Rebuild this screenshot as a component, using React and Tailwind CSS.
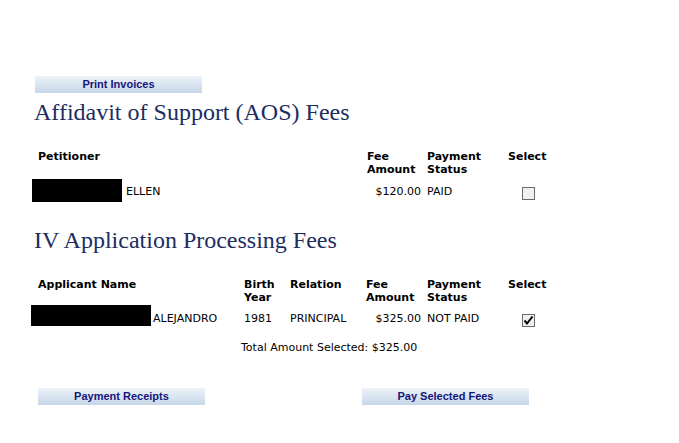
import React from "react";

const verdana = { fontFamily: '"DejaVu Sans", Verdana, sans-serif' };

function Btn({ children, className = "" }) {
  return (
    <div
      className={`h-[17px] w-[167px] flex items-center justify-center bg-gradient-to-b from-[#eef3f9] to-[#c6d7e9] text-[11px] font-bold text-[#16167a] leading-none ${className}`}
      style={{ fontFamily: '"Liberation Sans", Arial, sans-serif' }}
    >
      {children}
    </div>
  );
}

function Check({ checked }) {
  return (
    <div className="w-[13px] h-[13px] border border-[#6b6b6b] bg-[#f0f0f0] flex items-center justify-center">
      {checked && (
        <svg width="11" height="11" viewBox="0 0 11 11">
          <path d="M1.5 5.5 L4 8.5 L9.5 1.5" stroke="#000" strokeWidth="2" fill="none" />
        </svg>
      )}
    </div>
  );
}

export default function App() {
  return (
    <div className="w-[679px] h-[443px] bg-white pt-[76px] pl-[32px] text-black" style={verdana}>
      <Btn className="ml-[3px]">Print Invoices</Btn>

      <h1
        className="ml-[2px] mt-[6px] text-[24px] leading-[27px] text-[#1c2d5e]"
        style={{ fontFamily: '"Liberation Serif", "Times New Roman", serif' }}
      >
        Affidavit of Support (AOS) Fees
      </h1>

      <div className="mt-[24px] text-[11px] leading-[13px]">
        <div className="grid grid-cols-[329px_62px_79px_60px] font-bold">
          <div className="pl-[6px]">Petitioner</div>
          <div className="pl-[6px]">Fee<br />Amount</div>
          <div className="pl-[4px]">Payment<br />Status</div>
          <div className="pl-[6px]">Select</div>
        </div>
        <div className="grid grid-cols-[329px_62px_79px_60px] mt-[3px]">
          <div className="flex items-start">
            <div className="w-[90px] h-[23px] bg-black" />
            <span className="ml-[4px] pt-[6px]">ELLEN</span>
          </div>
          <div className="pt-[6px] text-right pr-[2px]">$120.00</div>
          <div className="pt-[6px] pl-[4px]">PAID</div>
          <div className="pt-[8px] pl-[20px]">
            <Check />
          </div>
        </div>
      </div>

      <h1
        className="ml-[2px] mt-[25px] text-[24px] leading-[27px] text-[#1c2d5e]"
        style={{ fontFamily: '"Liberation Serif", "Times New Roman", serif' }}
      >
        IV Application Processing Fees
      </h1>

      <div className="mt-[24px] text-[11px] leading-[13px]">
        <div className="grid grid-cols-[206px_46px_76px_63px_79px_60px] font-bold">
          <div className="pl-[6px]">Applicant Name</div>
          <div className="pl-[6px]">Birth<br />Year</div>
          <div className="pl-[6px]">Relation</div>
          <div className="pl-[6px]">Fee<br />Amount</div>
          <div className="pl-[4px]">Payment<br />Status</div>
          <div className="pl-[6px]">Select</div>
        </div>
        <div className="grid grid-cols-[206px_46px_76px_63px_79px_60px] mt-[1px]">
          <div className="flex items-start">
            <div className="ml-[-1px] w-[120px] h-[21px] bg-black" />
            <span className="ml-[2px] pt-[7px]">ALEJANDRO</span>
          </div>
          <div className="pt-[7px] pl-[6px]">1981</div>
          <div className="pt-[7px] pl-[6px]">PRINCIPAL</div>
          <div className="pt-[7px] text-right pr-[2px]">$325.00</div>
          <div className="pt-[7px] pl-[4px]">NOT PAID</div>
          <div className="pt-[9px] pl-[20px]">
            <Check checked />
          </div>
        </div>
        <div className="ml-[209px] mt-[14px]">Total Amount Selected: $325.00</div>
      </div>

      <div className="flex mt-[34px] ml-[6px] gap-[157px]">
        <Btn>Payment Receipts</Btn>
        <Btn>Pay Selected Fees</Btn>
      </div>
    </div>
  );
}
